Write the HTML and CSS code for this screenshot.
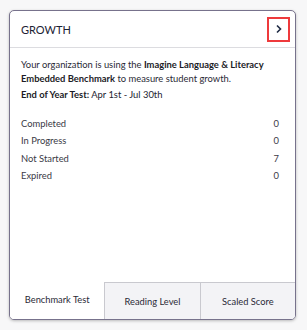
FILE: index.html
```html
<!DOCTYPE html>
<html>
<head>
<meta charset="utf-8">
<link rel="stylesheet" href="styles.css">
</head>
<body>
<div class="card">
  <div class="card-header">
    <span class="title">GROWTH</span>
    <button class="chev" aria-label="Open">
      <svg width="8" height="10" viewBox="0 0 8 10"><path d="M2 1.5 L5.5 5 L2 8.5" fill="none" stroke="#1f2a44" stroke-width="1.6"/></svg>
    </button>
  </div>
  <div class="card-body">
    <p class="desc">Your organization is using the <b>Imagine Language &amp; Literacy Embedded Benchmark</b> to measure student growth.</p>
    <p class="test"><b>End of Year Test:</b> Apr 1st - Jul 30th</p>
    <ul class="stats">
      <li><span>Completed</span><span>0</span></li>
      <li><span>In Progress</span><span>0</span></li>
      <li><span>Not Started</span><span>7</span></li>
      <li><span>Expired</span><span>0</span></li>
    </ul>
  </div>
  <div class="tabs">
    <div class="tab active">Benchmark Test</div>
    <div class="tab">Reading Level</div>
    <div class="tab">Scaled Score</div>
  </div>
</div>
</body>
</html>
```
FILE: styles.css
```css
html, body { margin: 0; padding: 0; }
body {
  background: #f7f7f8;
  font-family: Lato, "Open Sans", sans-serif;
  color: #23232f;
  width: 307px;
  height: 330px;
  overflow: hidden;
}
.card {
  margin: 10px 0 0 9px;
  width: 285px;
  height: 308px;
  background: #fff;
  border: 1px solid #77728c;
  border-radius: 5px;
  box-shadow: 0 1px 3px rgba(0,0,0,0.25);
  display: flex;
  flex-direction: column;
  overflow: hidden;
}
.card-header {
  height: 36px;
  border-bottom: 1px solid #dcdce0;
  display: flex;
  align-items: center;
  justify-content: space-between;
  padding: 0 5px 0 11px;
}
.title {
  font-size: 11px;
  color: #1c2233;
}
.chev {
  width: 23px;
  height: 25px;
  border: 2px solid #ee3a3c;
  background: #fff;
  padding: 0;
  display: flex;
  align-items: center;
  justify-content: center;
  box-sizing: border-box;
}
.card-body {
  flex: 1;
  padding: 10px 11px 0 11px;
  font-size: 9.4px;
}
.desc {
  margin: 0;
  line-height: 14px;
  color: #2a2a36;
}
.desc b, .test b { font-weight: 700; color: #1c1c26; }
.test {
  margin: 2px 0 0 0;
  line-height: 14px;
}
.stats {
  list-style: none;
  margin: 13px 0 0 0;
  padding: 0 5px 0 0;
}
.stats li {
  display: flex;
  justify-content: space-between;
  height: 17.3px;
  line-height: 17px;
  color: #3a3a46;
}
.tabs {
  display: flex;
  height: 37px;
}
.tab {
  flex: 1;
  display: flex;
  align-items: center;
  justify-content: center;
  font-size: 9.3px;
  color: #2a2a36;
  background: #f3f3f6;
  border-top: 1px solid #c9c9cf;
  border-left: 1px solid #c9c9cf;
}
.tab.active {
  background: #fff;
  border-top-color: transparent;
  border-left: none;
  padding-bottom: 3px;
}
```
